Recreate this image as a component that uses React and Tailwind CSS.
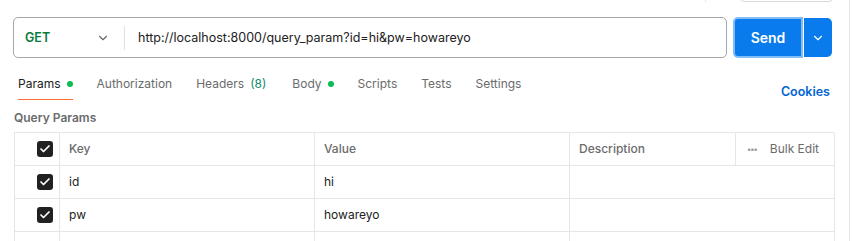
import { ChevronDown, Check } from 'lucide-react';

const tabs = [
  { label: 'Params', dot: true, active: true },
  { label: 'Authorization' },
  { label: 'Headers', count: '(8)' },
  { label: 'Body', dot: true },
  { label: 'Scripts' },
  { label: 'Tests' },
  { label: 'Settings' },
];

const rows = [
  { key: 'id', value: 'hi' },
  { key: 'pw', value: 'howareyo' },
];

function Checkbox() {
  return (
    <div className="w-4 h-4 rounded-[3px] bg-[#212121] flex items-center justify-center">
      <Check size={12} strokeWidth={3.5} className="text-white" />
    </div>
  );
}

export default function App() {
  return (
    <div
      className="relative w-[852px] h-[241px] overflow-hidden bg-white text-[12px] text-[#212121]"
      style={{ fontFamily: 'Inter, "Noto Sans", sans-serif' }}
    >
      {/* bits of the pane above, cut off */}
      <div className="absolute top-0 left-[705px] w-px h-[2px] bg-[#e6e6e6]" />
      <div className="absolute -top-4 left-[740px] w-[93px] h-[18px] border border-[#d9d9d9] rounded-[4px]" />
      <div className="absolute top-0 right-[2px] w-px h-full bg-[#e6e6e6]" />

      {/* request bar */}
      <div className="flex items-center pl-[13px] pt-[17px] pr-5">
        <div className="flex items-center h-[41px] w-[714px] border border-[#a6a6a6] rounded-[5px] text-[12.5px]">
          <div className="flex items-center justify-between w-[110px] pl-[11px] pr-[14px] pt-[1px]">
            <span className="font-semibold text-[#0b7a3e]">GET</span>
            <ChevronDown size={14} className="text-[#6b6b6b]" />
          </div>
          <div className="w-px h-[24px] bg-[#e0e0e0]" />
          <span className="pl-[13px] pt-[1px]">http://localhost:8000/query_param?id=hi&amp;pw=howareyo</span>
        </div>
        <div className="flex ml-[6px] h-[41px]">
          <button className="w-[70px] h-full bg-[#097bed] border-2 border-[#80bcf5] rounded-l-[5px] text-white font-semibold text-[14px]">
            Send
          </button>
          <div className="ml-[1px] my-[1px] w-[28px] bg-[#097bed] rounded-r-[5px] flex items-center justify-center">
            <ChevronDown size={14} className="text-white" />
          </div>
        </div>
      </div>

      {/* tabs */}
      <div className="flex items-start justify-between pl-[18px] pr-[22px] mt-[11px] text-[12px]">
        <div className="flex gap-[24px]">
          {tabs.map(t => (
            <div key={t.label} className="flex flex-col">
              <div className={`flex items-center gap-[6px] h-[30px] ${t.active ? 'text-[#212121]' : 'text-[#6b6b6b]'} ${t.count ? 'pr-[2px]' : ''}`}>
                <span>{t.label}</span>
                {t.count && <span className="text-[#0f8a6c]">{t.count}</span>}
                {t.dot && <span className="w-[6px] h-[6px] rounded-full bg-[#0cbb52]" />}
              </div>
              <div className={`h-[1px] ${t.active ? 'bg-[#ff6c37]' : ''}`} />
            </div>
          ))}
        </div>
        <span className="mt-[14px] font-semibold text-[12.5px] text-[#0265d2]">Cookies</span>
      </div>

      {/* query params */}
      <div className="pl-[14px] mt-[7px] text-[12px] font-semibold text-[#6b6b6b]">Query Params</div>
      <div className="ml-[14px] mt-[5px] w-[820px] border-t border-l border-[#e6e6e6]">
        <div className="grid grid-cols-[45px_255px_255px_166px_99px] h-[33px] text-[#6b6b6b] font-medium">
          <div className="flex items-center justify-end pr-[6px] border-r border-b border-[#e6e6e6]"><Checkbox /></div>
          <div className="flex items-center pl-[9px] border-r border-b border-[#e6e6e6]">Key</div>
          <div className="flex items-center pl-[9px] border-r border-b border-[#e6e6e6]">Value</div>
          <div className="flex items-center pl-[9px] border-r border-b border-[#e6e6e6]">Description</div>
          <div className="flex items-center pl-[11px] gap-[13px] border-r border-b border-[#e6e6e6]">
            <span className="text-[8px] tracking-[-1px] text-[#9a9a9a] leading-none">•••</span>
            <span className="font-normal">Bulk Edit</span>
          </div>
        </div>
        {rows.map(r => (
          <div key={r.key} className="grid grid-cols-[45px_255px_255px_265px] h-[33px]">
            <div className="flex items-center justify-end pr-[6px] border-r border-b border-[#e6e6e6]"><Checkbox /></div>
            <div className="flex items-center pl-[9px] border-r border-b border-[#e6e6e6]">{r.key}</div>
            <div className="flex items-center pl-[9px] border-r border-b border-[#e6e6e6]">{r.value}</div>
            <div className="border-r border-b border-[#e6e6e6]" />
          </div>
        ))}
        <div className="grid grid-cols-[45px_255px_255px_265px] h-[33px]">
          <div className="border-r border-[#e6e6e6]" />
          <div className="border-r border-[#e6e6e6]" />
          <div className="border-r border-[#e6e6e6]" />
          <div className="border-r border-[#e6e6e6]" />
        </div>
      </div>
    </div>
  );
}
